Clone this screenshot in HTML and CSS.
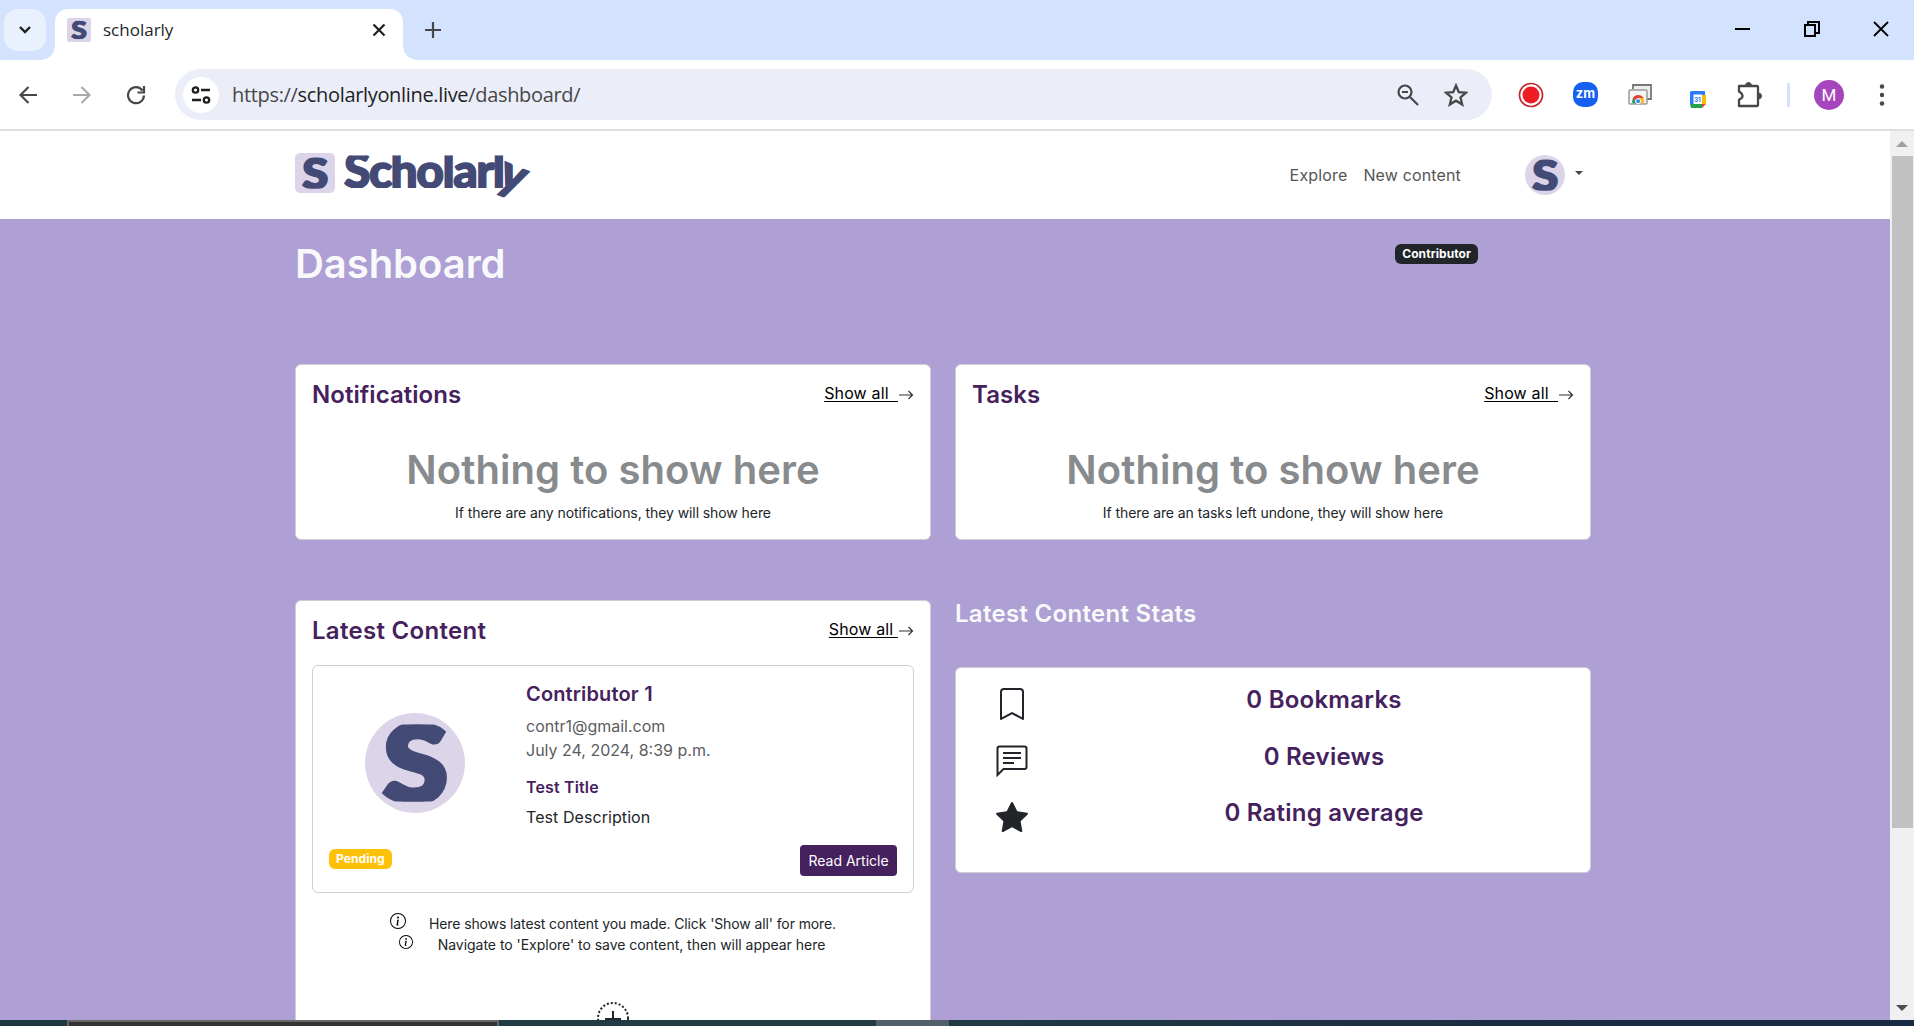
FILE: index.html
```html
<!DOCTYPE html>
<html lang="en">
<head>
<meta charset="utf-8">
<title>scholarly</title>
<link rel="stylesheet" href="styles.css">
</head>
<body>
<svg class="defs" aria-hidden="true">
  <defs>
    <clipPath id="mark-clip"><rect x="0" y="11.500" width="100" height="77"/></clipPath>
    <clipPath id="word-clip"><rect x="-4" y="5.500" width="200" height="32.500"/></clipPath>
    <symbol id="mark" viewBox="0 0 100 100">
      <g clip-path="url(#mark-clip)"><text x="18" y="89" class="mark-letter" textLength="65" lengthAdjust="spacingAndGlyphs">S</text></g>
    </symbol>
    <symbol id="arrow" viewBox="0 0 16 16"><path d="M1 8h13.500M10.500 4l4 4-4 4" fill="none" stroke="#333" stroke-width="1.200"/></symbol>
    <symbol id="info" viewBox="0 0 16 16"><path d="M8 15A7 7 0 1 1 8 1a7 7 0 0 1 0 14m0 1A8 8 0 1 0 8 0a8 8 0 0 0 0 16"/><path d="m8.930 6.588-2.290.287-.082.380.450.083c.294.070.352.176.288.469l-.738 3.468c-.194.897.105 1.319.808 1.319.545 0 1.178-.252 1.465-.598l.088-.416c-.200.176-.492.246-.686.246-.275 0-.375-.193-.304-.533zM9 4.500a1 1 0 1 1-2 0 1 1 0 0 1 2 0"/></symbol>
  </defs>
</svg>

<div class="browser">
  <div class="tabstrip">
    <div class="tab-search"><svg width="14" height="10" viewBox="0 0 14 10"><path d="M2 2l5 5 5-5" fill="none" stroke="#1f1f1f" stroke-width="2.400"/></svg></div>
    <div class="tab">
      <span class="favicon"><svg width="24" height="24"><use href="#mark"/></svg></span>
      <span class="tab-title">scholarly</span>
      <svg class="tab-close" width="14" height="14" viewBox="0 0 14 14"><path d="M1.500 1.500l11 11M12.500 1.500l-11 11" stroke="#1f1f1f" stroke-width="2.200"/></svg>
    </div>
    <svg class="new-tab" width="16" height="16" viewBox="0 0 16 16"><path d="M8 0v16M0 8h16" stroke="#474747" stroke-width="2.200"/></svg>
    <div class="window-controls">
      <svg width="16" height="16" viewBox="0 0 16 16"><path d="M0 8h15" stroke="#000" stroke-width="2"/></svg>
      <svg width="16" height="16" viewBox="0 0 16 16"><path d="M1 4h10v11H1zM4 4V1h11v11h-4" fill="none" stroke="#000" stroke-width="2"/></svg>
      <svg width="16" height="16" viewBox="0 0 16 16"><path d="M1 1l14 14M15 1L1 15" stroke="#000" stroke-width="1.800"/></svg>
    </div>
  </div>

  <div class="toolbar">
    <svg class="back" width="18" height="18" viewBox="0 0 18 18"><path d="M18 9H2M9.500 1L1.500 9l8 8" fill="none" stroke="#474747" stroke-width="2.200"/></svg>
    <svg class="forward" width="18" height="18" viewBox="0 0 18 18"><path d="M0 9h16M8.500 1l8 8-8 8" fill="none" stroke="#a9a9a9" stroke-width="2.200"/></svg>
    <svg class="reload" width="20" height="20" viewBox="0 0 20 20"><path d="M16.500 5.500A8 8 0 1 0 18 10.500M18 1v6.500h-6.500" fill="none" stroke="#474747" stroke-width="2.200"/></svg>
    <div class="omnibox">
      <span class="site-info"><svg width="20" height="18" viewBox="0 0 20 18"><g fill="none" stroke="#1f1f1f" stroke-width="2.300"><circle cx="4.500" cy="4" r="2.700"/><path d="M10 4h9M1 14h9"/><circle cx="15.500" cy="14" r="2.700"/></g></svg></span>
      <span class="url">https://<b>scholarlyonline.live</b>/dashboard/</span>
      <svg class="zoom-icon" width="22" height="22" viewBox="0 0 22 22"><g fill="none" stroke="#474747" stroke-width="2.200"><circle cx="8" cy="8" r="6.500"/><path d="M13 13l8 8M5 8h6"/></g></svg>
      <svg class="star-icon" width="24" height="24" viewBox="0 0 24 24"><path d="M12 2.500l2.800 6.600 7.200.6-5.500 4.700 1.700 7.100L12 17.700l-6.200 3.800 1.700-7.100L2 9.700l7.200-.6z" fill="none" stroke="#474747" stroke-width="2.300"/></svg>
    </div>
    <div class="extensions">
      <svg width="26" height="26" viewBox="0 0 26 26"><circle cx="13" cy="13" r="11.500" fill="#fff" stroke="#c4262d" stroke-width="1.700"/><circle cx="13" cy="13" r="8.500" fill="#ee1c25"/></svg>
      <span class="zm">zm</span>
      <svg width="24" height="22" viewBox="0 0 24 22"><path d="M5 5V1h18v14h-4" fill="#eee" stroke="#777" stroke-width="1.800"/><rect x="1" y="6" width="18" height="14" rx="1" fill="#f4f4f4" stroke="#999" stroke-width="1.500"/><path d="M4.500 19.300a5.800 5.800 0 0 1 .8-5.300l3 5.300z" fill="#1a9c5a"/><path d="M4.600 14.300a6.300 6.300 0 0 1 11-.3H10l-2 3z" fill="#dc4437"/><path d="M10.500 14h4.800a6 6 0 0 1 .5 5.300h-4z" fill="#fbc116"/><circle cx="10.200" cy="17.200" r="2.500" fill="#4285f4" stroke="#fff"/></svg>
      <svg class="calendar" width="16" height="17" viewBox="0 0 16 17"><path d="M1 0h14v4H4v9H0V1z" fill="#2f7af5"/><path d="M12 4h4v9h-4z" fill="#fbbc04"/><path d="M0 13h12v4H1z" fill="#27a04b"/><path d="M12 13h4l-4 4z" fill="#ea4335"/><rect x="3.500" y="3.500" width="8.500" height="9.500" fill="#fff"/><text x="3.900" y="10.800" class="cal-day">31</text></svg>
      <svg width="26" height="26" viewBox="0 0 26 26"><path d="M2 4h18q1 0 1 1v18q0 1-1 1H2v-6.500q3.500-1 3.500-3.500T2 9.500z" fill="none" stroke="#474747" stroke-width="2.300" stroke-linejoin="round"/><path d="M8.500 4a3 3.500 0 0 1 6 0M21 11a3.500 3 0 0 1 0 6" fill="#474747" stroke="#474747"/></svg>
    </div>
    <span class="divider"></span>
    <span class="profile">M</span>
    <svg class="menu" width="6" height="22" viewBox="0 0 6 22"><g fill="#474747"><circle cx="3" cy="2.500" r="2.200"/><circle cx="3" cy="11" r="2.200"/><circle cx="3" cy="19.500" r="2.200"/></g></svg>
  </div>

  <div class="viewport">
    <div class="page">
      <header class="navbar">
        <div class="brand">
          <span class="brand-mark"><svg width="40" height="40"><use href="#mark"/></svg></span>
          <svg class="wordmark" width="190" height="50" viewBox="0 0 190 50">
            <g clip-path="url(#word-clip)"><text x="0" y="38" class="word" textLength="161" lengthAdjust="spacing">Scholarl</text></g>
            <text transform="translate(152 35) rotate(22)" class="word">y</text>
          </svg>
        </div>
        <nav class="links"><a>Explore</a><a>New content</a></nav>
        <div class="user"><span class="avatar small"><svg width="40" height="40"><use href="#mark"/></svg></span><span class="caret"></span></div>
      </header>

      <main class="dashboard">
        <div class="title-row">
          <h1>Dashboard</h1>
          <span class="badge dark">Contributor</span>
        </div>

        <section class="row">
          <article class="card notice">
            <div class="card-head"><h2>Notifications</h2><a class="show-all"><u>Show all&nbsp;&nbsp;</u><svg width="16" height="16"><use href="#arrow"/></svg></a></div>
            <p class="empty">Nothing to show here</p>
            <p class="hint">If there are any notifications, they will show here</p>
          </article>
          <article class="card notice">
            <div class="card-head"><h2>Tasks</h2><a class="show-all"><u>Show all&nbsp;&nbsp;</u><svg width="16" height="16"><use href="#arrow"/></svg></a></div>
            <p class="empty">Nothing to show here</p>
            <p class="hint">If there are an tasks left undone, they will show here</p>
          </article>
        </section>

        <section class="row second">
          <article class="card latest">
            <div class="card-head"><h2 class="spaced">Latest Content</h2><a class="show-all"><u>Show all&nbsp;</u><svg width="16" height="16"><use href="#arrow"/></svg></a></div>
            <div class="card item">
              <div class="item-main">
                <span class="avatar large"><svg width="100" height="100"><use href="#mark"/></svg></span>
                <div class="item-text">
                  <h3>Contributor 1</h3>
                  <p class="muted">contr1@gmail.com</p>
                  <p class="muted">July 24, 2024, 8:39 p.m.</p>
                  <h4>Test Title</h4>
                  <p class="description">Test Description</p>
                </div>
              </div>
              <div class="item-foot"><span class="badge pending">Pending</span><a class="read">Read Article</a></div>
            </div>
            <p class="tip tip-a"><svg width="16" height="16"><use href="#info"/></svg><span>Here shows latest content you made. Click 'Show all' for more.</span></p>
            <p class="tip tip-b"><svg width="14" height="14"><use href="#info"/></svg><span>Navigate to 'Explore' to save content, then will appear here</span></p>
            <svg class="add" width="32" height="32" viewBox="0 0 32 32"><circle cx="16" cy="16" r="15" fill="none" stroke="#212529" stroke-width="2" stroke-dasharray="2 2"/><path d="M16 9v15M8 17h16" stroke="#212529" stroke-width="2"/></svg>
          </article>
          <div class="stats">
            <h2 class="spaced">Latest Content Stats</h2>
            <div class="card stats-card">
              <div class="stat"><svg width="32" height="32" viewBox="0 0 16 16"><path d="M2 2a2 2 0 0 1 2-2h8a2 2 0 0 1 2 2v13.500a.5.5 0 0 1-.777.416L8 13.101l-5.223 2.815A.5.5 0 0 1 2 15.500zm2-1a1 1 0 0 0-1 1v12.566l4.723-2.482a.5.5 0 0 1 .554 0L13 14.566V2a1 1 0 0 0-1-1z"/></svg><span>0 Bookmarks</span></div>
              <div class="stat"><svg width="32" height="32" viewBox="0 0 32 32"><path d="M1.500 30V3.500q0-2 2-2h25q2 0 2 2V22q0 2-2 2h-21z" fill="none" stroke="#212529" stroke-width="2"/><path d="M7 8h18M7 13h18M7 18h11" stroke="#212529" stroke-width="2"/></svg><span>0 Reviews</span></div>
              <div class="stat"><svg width="32" height="32" viewBox="0 0 16 16"><path d="M3.612 15.443c-.386.198-.824-.149-.746-.592l.830-4.730L.173 6.765c-.329-.314-.158-.888.283-.950l4.898-.696L7.538.792c.197-.390.730-.390.927 0l2.184 4.327 4.898.696c.441.062.612.636.282.950l-3.522 3.356.830 4.730c.078.443-.360.790-.746.592L8 13.187z"/></svg><span>0 Rating average</span></div>
            </div>
          </div>
        </section>
      </main>
    </div>
    <div class="scrollbar"><span class="up"></span><span class="thumb"></span><span class="down"></span></div>
  </div>
  <div class="taskbar"><i class="t1"></i><i class="t2"></i><i class="t3"></i><i class="t4"></i><i class="t5"></i></div>
</div>
</body>
</html>
```

FILE: styles.css
```css
* { box-sizing: border-box; }
body { margin: 0; overflow: hidden; font-family: Inter, sans-serif; color: #212529; }
h1, h2, h3, h4, p { margin: 0; font-weight: 600; }
svg { display: block; flex: none; }
.defs { position: absolute; width: 0; height: 0; }
.mark-letter { font: 900 106px Lato, sans-serif; fill: #434a75; stroke: #434a75; stroke-width: 5px; }
.browser { width: 1914px; height: 1026px; display: flex; flex-direction: column; background: #fff; }

.tabstrip { height: 60px; flex: none; display: flex; align-items: flex-start; background: #d3e2fd; }
.tab-search { width: 42px; height: 42px; margin: 9px 9px 0 4px; border-radius: 14px; background: #e9f1fe; display: grid; place-items: center; }
.tab { width: 348px; height: 51px; margin-top: 9px; padding: 0 17px 9px 12px; border-radius: 13px 13px 0 0; background: #fff; display: flex; align-items: center; position: relative; }
.tab::before, .tab::after { content: ""; position: absolute; bottom: 0; width: 14px; height: 14px; }
.tab::before { left: -14px; background: radial-gradient(circle at 0 0, transparent 13.5px, #fff 14px); }
.tab::after { right: -14px; background: radial-gradient(circle at 100% 0, transparent 13.5px, #fff 14px); }
.favicon { width: 24px; height: 24px; background: #dcd5ea; border-radius: 2px; }
.tab-title { font: 17px "Open Sans", sans-serif; margin: 0 0 2px 12px; color: #1f1f1f; }
.tab-close { margin-left: auto; }
.new-tab { margin: 22px 0 0 22px; }
.window-controls { display: flex; gap: 53px; margin: 21px 25px 0 auto; }

.toolbar { height: 71px; flex: none; display: flex; align-items: center; border-bottom: 2px solid #dedede; padding: 0 29px 0 19px; }
.forward { margin-left: 36px; }
.reload { margin-left: 35px; }
.omnibox { width: 1317px; height: 51px; margin-left: 29px; border-radius: 26px; background: #ebeef8; display: flex; align-items: center; padding: 0 24px 0 8px; }
.site-info { width: 36px; height: 36px; border-radius: 50%; background: #fff; display: grid; place-items: center; }
.url { margin-left: 13px; font: 20px "Open Sans", sans-serif; color: #474747; letter-spacing: -.33px; }
.url b { font-weight: 400; color: #1f1f1f; }
.zoom-icon { margin-left: auto; }
.star-icon { margin-left: 25px; }
.extensions { display: flex; align-items: center; margin-left: 26px; }
.zm { width: 25px; height: 25px; border-radius: 10px; background: #1560f0; color: #fff; font: 700 13px/23px Inter, sans-serif; text-align: center; margin: 0 30px 0 29px; }
.calendar { margin: 9px 31px 0 38px; }
.cal-day { font: 700 6.5px Inter, sans-serif; fill: #2f7af5; }
.divider { width: 3px; height: 24px; margin-left: 24px; background: #d3e2fd; }
.profile { width: 30px; height: 30px; border-radius: 50%; margin-left: 24px; background: #a745bd; color: #fff; font: 400 17px/31px Roboto, sans-serif; text-align: center; }
.menu { margin-left: auto; }

.viewport { flex: 1; min-height: 0; display: flex; }
.page { width: 1890px; display: flex; flex-direction: column; overflow: hidden; background: #ae9fd4; }
.navbar { height: 88px; flex: none; padding: 0 307px 0 295px; display: flex; align-items: center; background: #fff; }
.brand { display: flex; align-items: center; }
.brand-mark { width: 40px; height: 40px; border-radius: 5px; background: #dcd5ea; margin-bottom: 4px; }
.wordmark { margin-left: 9px; overflow: visible; }
.word { font: 900 48px Lato, sans-serif; fill: #434a75; stroke: #434a75; stroke-width: 1.6px; }
.links { display: flex; gap: 16px; margin-left: auto; font-size: 16px; color: #555; letter-spacing: .15px; }
.user { display: flex; align-items: center; margin-left: 64px; gap: 10px; }
.avatar { border-radius: 50%; background: #dcd5ea; overflow: hidden; flex: none; }
.avatar.small { width: 40px; height: 40px; }
.avatar.large { width: 100px; height: 100px; margin: 31px 61px 0 36px; }
.caret { border: 4px solid transparent; border-top-color: #444; border-bottom: 0; margin-bottom: 4px; }

.dashboard { padding: 0 299px 0 295px; }
.title-row { height: 145px; padding: 21px 113px 0 0; display: flex; justify-content: space-between; align-items: flex-start; }
h1 { font-size: 40px; line-height: 48px; color: #f8f9fa; letter-spacing: -.05px; }
.badge { height: 20px; border-radius: 6px; color: #fff; font: 700 12px/20px Inter, sans-serif; padding: 0 7px; letter-spacing: .08px; }
.badge.dark { background: #212529; margin-top: 4px; }
.badge.pending { background: #ffc107; margin-top: 4px; }
.row { display: grid; grid-template-columns: 636px 636px; gap: 24px; }
.card { background: #fff; border: 1px solid #d0cdd6; border-radius: 6px; }
.notice { height: 176px; padding: 15px 16px; }
.card-head { display: flex; justify-content: space-between; align-items: flex-start; }
h2 { font-size: 24px; line-height: 29px; color: #45215e; letter-spacing: .05px; }
h2.spaced { letter-spacing: .3px; }
.show-all { display: flex; align-items: center; font-size: 16px; line-height: 26px; color: #000; letter-spacing: .15px; }
.show-all svg { margin-top: 4px; }
.show-all u { text-underline-offset: 2px; }
.empty { font-size: 40px; line-height: 48px; text-align: center; color: #888b8e; margin-top: 37px; letter-spacing: .05px; }
.hint { font-size: 14px; line-height: 20px; text-align: center; font-weight: 400; margin-top: 9px; letter-spacing: -.08px; }
.second { margin-top: 60px; align-items: start; }
.latest { height: 520px; padding: 15px 16px; }
.item { height: 228px; margin-top: 20px; padding: 16px 16px; }
.item-main { display: flex; height: 163px; }
h3 { font-size: 20px; line-height: 24px; color: #45215e; margin-bottom: 8px; letter-spacing: .15px; }
h4 { font-size: 16px; line-height: 19px; color: #45215e; margin: 16px 0 9px; letter-spacing: .15px; }
.muted { font-size: 16px; line-height: 24px; font-weight: 400; color: #5b5d60; }
.description { font-size: 16px; line-height: 22px; font-weight: 400; letter-spacing: .07px; }
.item-foot { display: flex; justify-content: space-between; align-items: flex-start; }
.read { width: 97px; height: 31px; border-radius: 4px; background: #45215e; color: #fff; font-size: 14px; line-height: 32px; text-align: center; }
.tip { display: flex; justify-content: center; align-items: flex-start; font-size: 14px; line-height: 21px; font-weight: 400; letter-spacing: -.11px; }
.tip-a { margin-top: 20px; }
.tip-a span { margin: 0 0 0 23px; }
.tip-b { letter-spacing: -.03px; padding-right: 2px; }
.tip-b span { margin: 0 0 0 25px; }
.tip-b svg { margin-top: 1px; }
.add { margin: 47px auto 0; }
.stats h2 { color: #f8f9fa; margin-top: -1px; }
.stats-card { height: 206px; margin-top: 39px; padding: 17px 38px 17px 40px; }
.stat { display: flex; height: 56.5px; }
.stat svg { fill: #212529; margin-top: 3px; }
.stat span { flex: 1; text-align: center; font-size: 24px; line-height: 29px; font-weight: 600; color: #45215e; padding-left: 68px; letter-spacing: .25px; }

.scrollbar { width: 24px; background: #f0f0f0; display: flex; flex-direction: column; align-items: center; }
.up { border: 6px solid transparent; border-bottom-color: #a0a0a0; border-top: 0; margin-top: 10px; }
.thumb { width: 21px; height: 672px; background: #c1c1c1; margin-top: 9px; }
.down { border: 6px solid transparent; border-top-color: #4e4e4e; border-bottom: 0; margin: auto 0 9px; }
.taskbar { height: 6px; flex: none; display: flex; background: #1a2942; }
.t1 { width: 67px; background: #1e3940; }
.t2 { width: 432px; background: #333; border: 2px solid #666; border-bottom: 0; }
.t3 { width: 377px; background: #223c44; }
.t4 { width: 73px; background: #52606b; }
.t5 { flex: 1; background: linear-gradient(90deg, #203a43, #1a2942 70%); }
```
